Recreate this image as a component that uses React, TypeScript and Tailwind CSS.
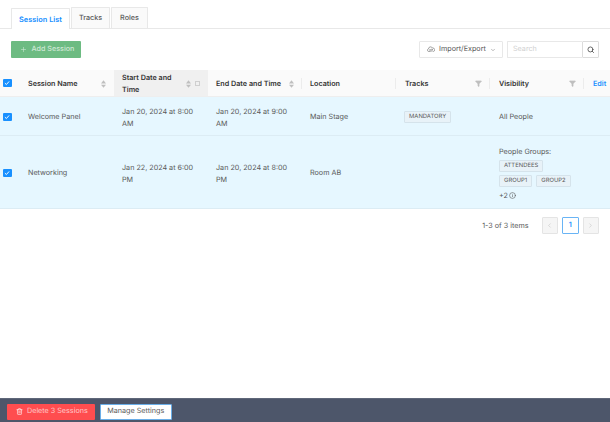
import { ChevronDown, ChevronLeft, ChevronRight, Filter, Info, Plus, Search, Trash2 } from "lucide-react";

function Sorter() {
  return (
    <svg viewBox="0 0 8 12" className="w-[5px] h-[8px] shrink-0 fill-[#bfbfbf]">
      <path d="M4 0 8 5H0z" />
      <path d="M4 12 0 7h8z" />
    </svg>
  );
}

function FunnelIcon() {
  return <Filter className="w-[7px] h-[7px] shrink-0 fill-[#bfbfbf] text-[#bfbfbf]" strokeWidth={2} />;
}

function CloudIcon() {
  return (
    <svg viewBox="0 0 16 12" className="w-[8px] h-[6.5px] shrink-0 fill-none stroke-[#666] stroke-[1.2]">
      <path d="M4 10.5H3.4A2.7 2.7 0 0 1 3 5.2 4.2 4.2 0 0 1 11 3.6a3.5 3.5 0 0 1 1.6 6.9H12" />
      <path d="M4.5 7h7M9.5 5l2 2M11.5 9.5h-7M6.5 11.5l-2-2" />
    </svg>
  );
}

function Check() {
  return (
    <div className="w-[8.5px] h-[8.5px] rounded-[1px] bg-[#1890ff] flex items-center justify-center">
      <svg viewBox="0 0 10 10" className="w-[6px] h-[6px] fill-none stroke-white stroke-[1.6]">
        <path d="M1.5 5.2 4 7.6 8.5 2.4" />
      </svg>
    </div>
  );
}

function Tag({ children }: { children: string }) {
  return (
    <span className="inline-flex items-center h-[12px] px-[4px] rounded-[1px] border border-[#d5e3eb] bg-[#e8f2f8] text-[5.9px] leading-none text-[#595959]">
      {children}
    </span>
  );
}

function Th({ children, className = "" }: { children: React.ReactNode; className?: string }) {
  return (
    <div className={`relative flex items-center gap-[4px] pl-[8px] pr-[8px] pt-[1px] text-[#333] font-semibold leading-[11.5px] ${className}`}>
      {children}
    </div>
  );
}

function Divider() {
  return <span className="absolute right-0 top-[8px] h-[11px] w-px bg-[#ececec]" />;
}

const grid = "grid grid-cols-[20px_94px_94px_94px_94px_94px_94px_26px]";

function Row({ name, start, end, location, tracks, visibility, height }: {
  name: string;
  start: string;
  end: string;
  location: string;
  tracks?: React.ReactNode;
  visibility: React.ReactNode;
  height: string;
}) {
  return (
    <div className={`${grid} ${height} bg-[#e6f7ff] border-b border-[#dcecf4] items-center text-[#595959]`}>
      <div className="pl-[3px] pt-[2px]"><Check /></div>
      <div className="pl-[8px] pt-[3px]">{name}</div>
      <div className="pl-[8px] pr-[8px] pt-[3px] leading-[11.3px]">{start}</div>
      <div className="pl-[8px] pr-[8px] pt-[3px] leading-[11.3px]">{end}</div>
      <div className="pl-[8px] pt-[3px]">{location}</div>
      <div className="pl-[8px] pt-[2px]">{tracks}</div>
      <div className="pl-[9px] pt-[3px]">{visibility}</div>
      <div />
    </div>
  );
}

function PageBtn({ children, active }: { children: React.ReactNode; active?: boolean }) {
  return (
    <div className={`w-[16.5px] h-[17px] rounded-[1px] border flex items-center justify-center ${active ? "border-[#69b4f5] bg-white text-[#1890ff] font-semibold" : "border-[#e4e4e4] bg-[#f5f5f5] text-[#c4c4c4]"}`}>
      {children}
    </div>
  );
}

export default function App() {
  return (
    <div className="w-[610px] h-[422px] flex flex-col bg-white overflow-hidden text-[7.2px] [text-rendering:geometricPrecision] font-['Inter',_'Liberation_Sans',_sans-serif]">
      <div className="flex items-end gap-[1px] h-[29px] pl-[11px] border-b border-[#e8e8e8]">
        <div className="h-[21px] w-[59px] -mb-px pt-[1px] flex items-center justify-center bg-white border border-b-0 border-[#e8e8e8] rounded-t-[1px] text-[7.4px] text-[#1890ff] font-semibold">Session List</div>
        <div className="h-[21px] w-[39px] pt-[1px] flex items-center justify-center bg-[#fafafa] border border-b-0 border-[#e8e8e8] rounded-t-[1px] text-[#595959] font-medium">Tracks</div>
        <div className="h-[21px] w-[37px] pt-[1px] flex items-center justify-center bg-[#fafafa] border border-b-0 border-[#e8e8e8] rounded-t-[1px] text-[#595959] font-medium">Roles</div>
      </div>

      <div className="flex items-center justify-between h-[41px] pl-[11px] pr-[11px]">
        <div className="w-[70px] h-[17px] rounded-[1px] bg-[#6dbb82] flex items-center gap-[4.5px] pl-[9px] text-[#cfe8d6] font-medium whitespace-nowrap">
          <Plus className="w-[7px] h-[7px]" strokeWidth={2} />
          Add Session
        </div>
        <div className="flex items-center gap-[4px]">
          <div className="w-[84px] h-[17px] rounded-[1px] border border-[#e8e8e8] flex items-center pl-[7px] text-[#595959]">
            <CloudIcon />
            <span className="ml-[4px]">Import/Export</span>
            <ChevronDown className="w-[6px] h-[6px] ml-[4px] text-[#777]" />
          </div>
          <div className="flex h-[17px] w-[92px]">
            <div className="flex-1 rounded-l-[1px] border border-r-0 border-[#e8e8e8] flex items-center pl-[5px] text-[#d0d0d0]">Search</div>
            <div className="w-[17px] rounded-[1px] border border-[#dcdcdc] flex items-center justify-center">
              <Search className="w-[7.5px] h-[7.5px] text-[#444]" strokeWidth={2.5} />
            </div>
          </div>
        </div>
      </div>

      <div className={`${grid} h-[27px] bg-[#fafafa] border-b border-[#eeeeee]`}>
        <div className="flex items-center pl-[3px]"><Check /></div>
        <Th className="justify-between">Session Name<Sorter /></Th>
        <Th className="bg-[#f0f0f0] justify-between">
          <span className="w-[56px]">Start Date and Time</span>
          <span className="flex items-center gap-[4px]">
            <Sorter />
            <span className="w-[5px] h-[5px] border border-[#cfcfcf]" />
          </span>
        </Th>
        <Th className="justify-between whitespace-nowrap">End Date and Time<Sorter /><Divider /></Th>
        <Th>Location<Divider /></Th>
        <Th className="justify-between pl-[9px]">Tracks<FunnelIcon /><Divider /></Th>
        <Th className="justify-between pl-[9px]">Visibility<FunnelIcon /><Divider /></Th>
        <div className="flex items-center pl-[9px] pt-[2px] text-[#1890ff] font-semibold leading-[11.5px]">Edit</div>
      </div>

      <Row
        name="Welcome Panel"
        start="Jan 20, 2024 at 8:00 AM"
        end="Jan 20, 2024 at 9:00 AM"
        location="Main Stage"
        height="h-[39px]"
        tracks={<Tag>MANDATORY</Tag>}
        visibility="All People"
      />
      <Row
        name="Networking"
        start="Jan 22, 2024 at 6:00 PM"
        end="Jan 20, 2024 at 8:00 PM"
        location="Room AB"
        height="h-[73px]"
        visibility={
          <div className="flex flex-col gap-[3px] items-start leading-[11px]">
            <span>People Groups:</span>
            <Tag>ATTENDEES</Tag>
            <div className="flex gap-[4px]">
              <Tag>GROUP1</Tag>
              <Tag>GROUP2</Tag>
            </div>
            <span className="flex items-center gap-[1px]">+2 <Info className="w-[7px] h-[7px]" /></span>
          </div>
        }
      />

      <div className="flex items-center justify-end h-[33px] pr-[11px] text-[#595959]">
        <span className="mr-[13px] pt-[2px]">1-3 of 3 items</span>
        <div className="flex gap-[4px]">
          <PageBtn><ChevronLeft className="w-[7px] h-[7px]" /></PageBtn>
          <PageBtn active>1</PageBtn>
          <PageBtn><ChevronRight className="w-[7px] h-[7px]" /></PageBtn>
        </div>
      </div>

      <div className="flex-1" />

      <div className="h-[24px] bg-[#4d566a] border-t border-[#5f6779] flex items-center gap-[5px] pl-[7px] pt-[2px]">
        <div className="w-[88px] h-[16px] rounded-[1px] bg-[#ff4d4f] flex items-center pl-[9px] text-[#ffc9c9] whitespace-nowrap">
          <Trash2 className="w-[7px] h-[7px] text-white" />
          <span className="ml-[4px]">Delete 3 Sessions</span>
        </div>
        <div className="w-[71.5px] h-[16px] rounded-[1px] bg-white border border-[#6aaee8] flex items-center justify-center text-[#595959] whitespace-nowrap">Manage Settings</div>
      </div>
    </div>
  );
}
